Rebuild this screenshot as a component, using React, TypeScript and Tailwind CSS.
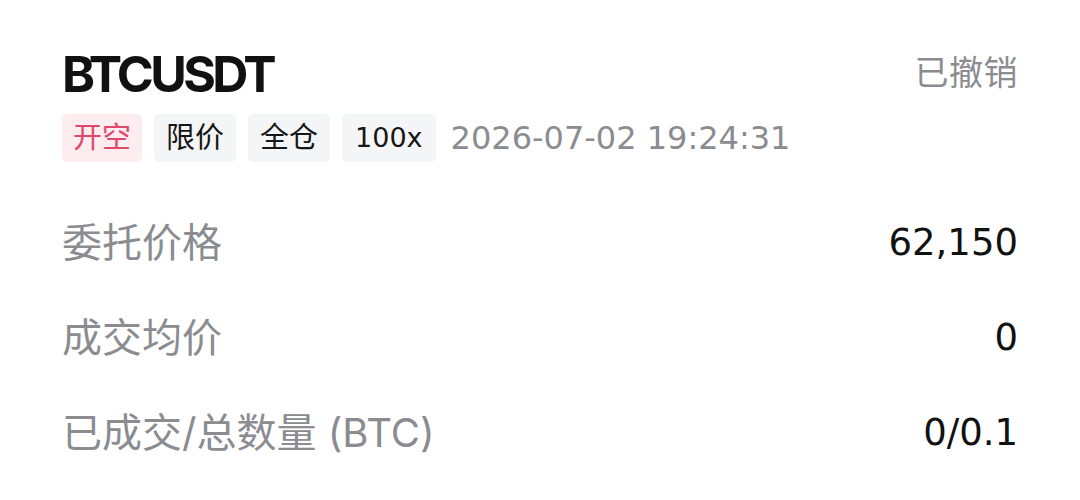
import React from "react";

const cjk = '"Inter", "Noto Sans CJK SC", sans-serif';
const title = '"Inter", sans-serif';
const nums = '"DejaVu Sans", "Noto Sans CJK SC", sans-serif';

type Tag = { text: string; tone: "short" | "plain"; latin?: boolean };

const tags: Tag[] = [
  { text: "开空", tone: "short" },
  { text: "限价", tone: "plain" },
  { text: "全仓", tone: "plain" },
  { text: "100x", tone: "plain", latin: true },
];

const rows = [
  { label: "委托价格", value: "62,150" },
  { label: "成交均价", value: "0" },
  { label: "已成交/总数量 (BTC)", value: "0/0.1" },
];

export default function App() {
  return (
    <div className="w-[1080px] h-[500px] bg-white overflow-hidden" style={{ fontFamily: cjk }}>
      <div className="px-[62px] pt-[49px]">
        <div className="flex items-center justify-between h-[50px]">
          <span
            className="text-[50px] leading-[50px] font-bold text-[#111111] tracking-[-3.6px]"
            style={{ fontFamily: title }}
          >
            BTCUSDT
          </span>
          <span className="text-[34px] leading-[50px] text-[#8a8c90] tracking-[0.5px] -mt-[2px]">已撤销</span>
        </div>

        <div className="flex items-center mt-[15px] h-[48px]">
          <div className="flex gap-3">
            {tags.map((t) => (
              <span
                key={t.text}
                style={t.latin ? { fontFamily: nums } : undefined}
                className={
                  t.tone === "short"
                    ? "h-[48px] px-[11px] flex items-center rounded-[5px] bg-[#fdedf0] text-[#e0486a] text-[29px]"
                    : t.latin
                    ? "h-[48px] px-[13px] flex items-center rounded-[5px] bg-[#f4f5f7] text-[#161616] text-[27px]"
                    : "h-[48px] px-[12px] flex items-center rounded-[5px] bg-[#f4f5f7] text-[#161616] text-[29px]"
                }
              >
                {t.text}
              </span>
            ))}
          </div>
          <span className="ml-[15px] text-[32px] text-[#8a8c90]" style={{ fontFamily: nums }}>
            2026-07-02 19:24:31
          </span>
        </div>

        <div className="mt-[33px] flex flex-col">
          {rows.map((r) => (
            <div key={r.label} className="h-[95px] flex items-center justify-between">
              <span className="text-[40px] text-[#8a8c90]">{r.label}</span>
              <span className="text-[37px] text-[#111111]" style={{ fontFamily: nums }}>
                {r.value}
              </span>
            </div>
          ))}
        </div>
      </div>
    </div>
  );
}
